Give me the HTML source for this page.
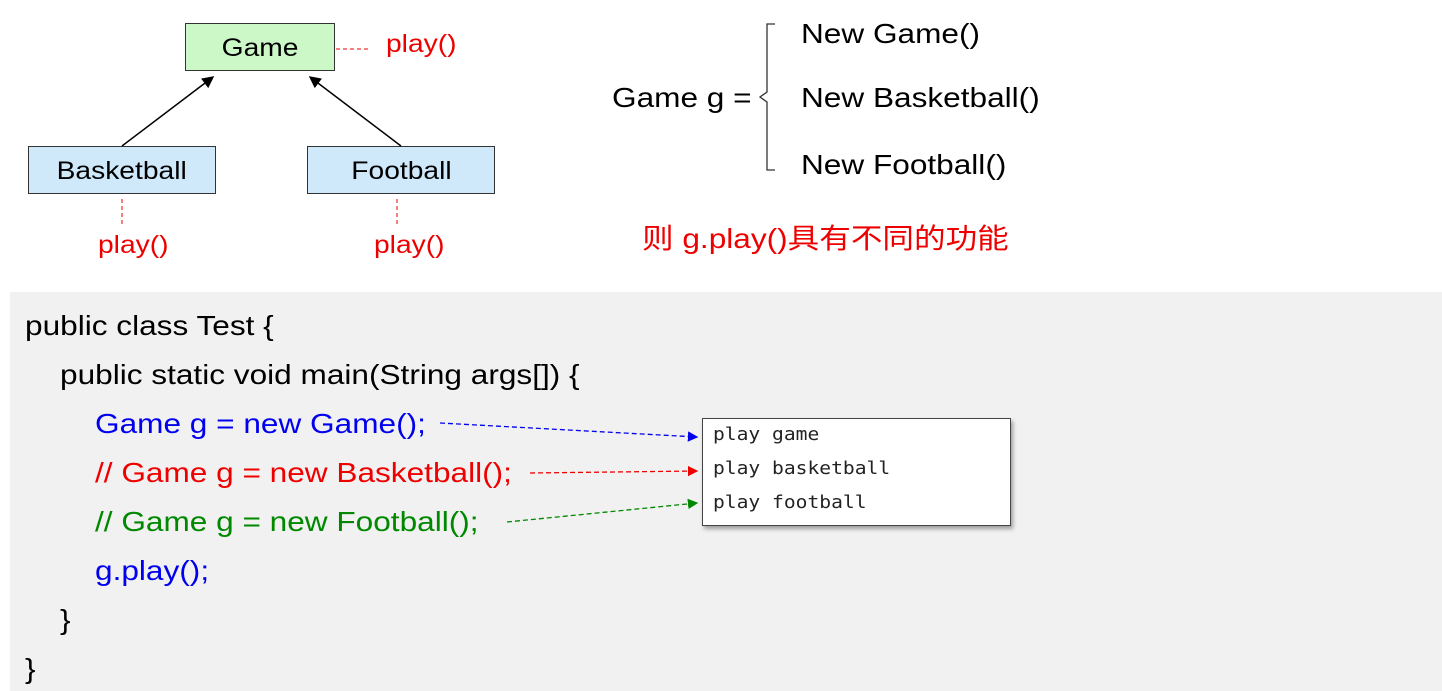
<!DOCTYPE html>
<html><head><meta charset="utf-8"><style>
body{margin:0;width:1442px;height:691px;background:#fff;position:relative;overflow:hidden;font-family:"Liberation Sans","Noto Sans CJK SC",sans-serif}
.a{position:absolute;white-space:nowrap;line-height:1;transform:scaleX(1.128);transform-origin:0 0}
.box{position:absolute;border:1px solid #333;box-sizing:border-box;font-size:25px;display:flex;align-items:center;justify-content:center;padding-top:3px}
.box span{display:inline-block;transform:scaleX(1.128)}
.code{font-size:28px}
.mono{font-family:"DejaVu Sans Mono","Liberation Mono",monospace;font-size:18px;color:#222;transform:scaleX(1.09)}
</style></head><body>
<div class="box" style="left:185px;top:23px;width:150px;height:48px;background:#ccf8c8"><span>Game</span></div>
<div class="box" style="left:28px;top:146px;width:188px;height:48px;background:#cfe8fa"><span>Basketball</span></div>
<div class="box" style="left:307px;top:146px;width:188px;height:48px;background:#cfe8fa"><span>Football</span></div>
<div class="a" style="left:386px;top:32px;font-size:25px;color:#e00">play()</div>
<div class="a" style="left:98px;top:233px;font-size:25px;color:#e00">play()</div>
<div class="a" style="left:374px;top:233px;font-size:25px;color:#e00">play()</div>
<div class="a" style="left:612px;top:84px;font-size:28px">Game g =</div>
<div class="a" style="left:801px;top:20px;font-size:28px">New Game()</div>
<div class="a" style="left:801px;top:84px;font-size:28px">New Basketball()</div>
<div class="a" style="left:801px;top:151px;font-size:28px">New Football()</div>
<div class="a" style="left:642px;top:225px;font-size:28px;color:#e00">则 g.play()具有不同的功能</div>
<div style="position:absolute;left:10px;top:292px;width:1432px;height:399px;background:#f1f1f1"></div>
<div class="a code" style="left:25px;top:312px">public class Test {</div>
<div class="a code" style="left:60px;top:361px">public static void main(String args[]) {</div>
<div class="a code" style="left:95px;top:410px;color:#00e">Game g = new Game();</div>
<div class="a code" style="left:95px;top:459px;color:#e00">// Game g = new Basketball();</div>
<div class="a code" style="left:95px;top:508px;color:#080">// Game g = new Football();</div>
<div class="a code" style="left:95px;top:557px;color:#00e">g.play();</div>
<div class="a code" style="left:60px;top:606px">}</div>
<div class="a code" style="left:25px;top:655px">}</div>
<div style="position:absolute;left:702px;top:418px;width:309px;height:108px;background:#fff;border:1px solid #444;box-sizing:border-box;box-shadow:2px 3px 4px rgba(0,0,0,.35)"></div>
<div class="a mono" style="left:713px;top:426px">play game</div>
<div class="a mono" style="left:713px;top:460px">play basketball</div>
<div class="a mono" style="left:713px;top:494px">play football</div>
<svg width="1442" height="691" style="position:absolute;left:0;top:0">
<defs>
<marker id="k" markerWidth="8" markerHeight="8" refX="7" refY="4" orient="auto"><path d="M0,0L8,4L0,8z" fill="#000"/></marker>
<marker id="b" markerWidth="8" markerHeight="8" refX="7" refY="4" orient="auto"><path d="M0,0L8,4L0,8z" fill="#00e"/></marker>
<marker id="r" markerWidth="8" markerHeight="8" refX="7" refY="4" orient="auto"><path d="M0,0L8,4L0,8z" fill="#e00"/></marker>
<marker id="g" markerWidth="8" markerHeight="8" refX="7" refY="4" orient="auto"><path d="M0,0L8,4L0,8z" fill="#080"/></marker>
</defs>
<line x1="122" y1="146" x2="213" y2="77" stroke="#000" stroke-width="1.5" marker-end="url(#k)"/>
<line x1="401" y1="146" x2="310" y2="77" stroke="#000" stroke-width="1.5" marker-end="url(#k)"/>
<line x1="336" y1="49" x2="368" y2="49" stroke="#e00" stroke-dasharray="4,3"/>
<line x1="122" y1="199" x2="122" y2="224" stroke="#e00" stroke-dasharray="4,3"/>
<line x1="397" y1="199" x2="397" y2="224" stroke="#e00" stroke-dasharray="4,3"/>
<path d="M775,24 H767 V92 L760,97 L767,102 V170 H775" fill="none" stroke="#333" stroke-width="1.3"/>
<line x1="440" y1="423" x2="697" y2="437" stroke="#00e" stroke-width="1.3" stroke-dasharray="5,3" marker-end="url(#b)"/>
<line x1="530" y1="473" x2="697" y2="471" stroke="#e00" stroke-width="1.3" stroke-dasharray="5,3" marker-end="url(#r)"/>
<line x1="507" y1="522" x2="697" y2="503" stroke="#080" stroke-width="1.3" stroke-dasharray="5,3" marker-end="url(#g)"/>
</svg>
</body></html>
